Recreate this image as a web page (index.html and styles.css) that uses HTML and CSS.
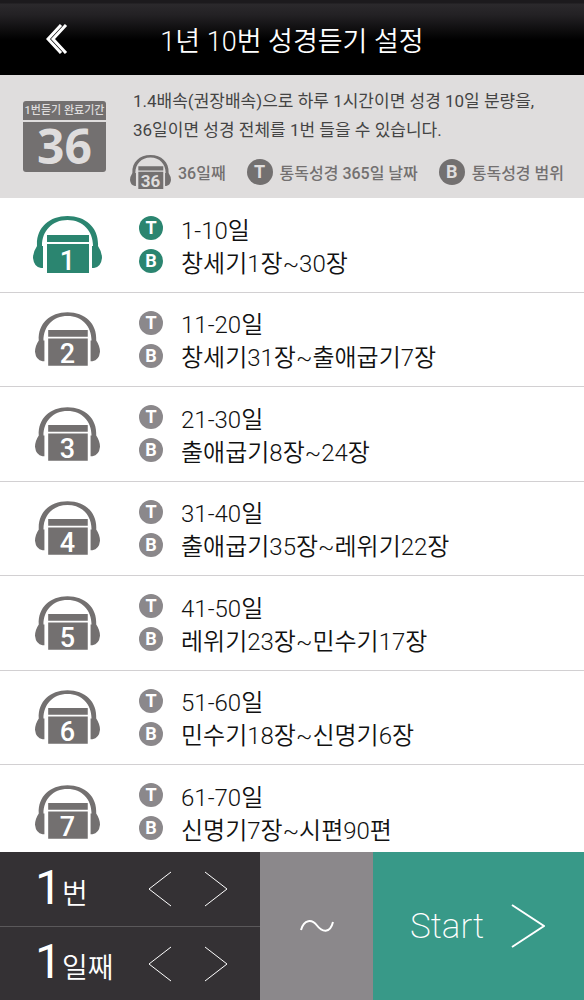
FILE: index.html
```html
<!DOCTYPE html>
<html lang="ko">
<head>
    <meta charset="UTF-8">
    <meta name="viewport" content="width=device-width, initial-scale=1.0">
    <title>1년 10번 성경듣기 설정</title>
    <link rel="stylesheet" href="styles.css">
</head>
<body>
    <svg class="defs" aria-hidden="true">
        <symbol id="headphones" viewBox="0 0 69 57">
            <path d="M4 30C3 12 16 0 34.500 0S66 12 65 30Q69 36 69 42Q68 51 61 52H59V30H60C60 15 50 4 34.500 4S9 15 9 30H10V52H8Q1 51 0 42Q0 36 4 30Z"/>
            <path d="M14 19H56V26H14ZM14 28H56V57H14Z"/>
        </symbol>
    </svg>
    <header class="title-bar">
        <button class="back" aria-label="뒤로">
            <svg width="22" height="30" viewBox="0 0 22 30">
                <path d="M15 1L2 15L15 29M20 1L7 15L20 29"/>
            </svg>
        </button>
        <h1>1년 10번 성경듣기 설정</h1>
    </header>
    <section class="info">
        <div class="calendar">
            <div class="calendar-head">1번듣기 완료기간</div>
            <div class="calendar-day">36</div>
        </div>
        <div class="info-text">
            <p>1.4배속(권장배속)으로 하루 1시간이면 성경 10일 분량을,<br>36일이면 성경 전체를 1번 들을 수 있습니다.</p>
            <div class="legend">
                <span class="legend-item">
                    <span class="phones small"><svg><use href="#headphones"/></svg><b>36</b></span>
                    36일째
                </span>
                <span class="legend-item"><span class="badge">T</span>통독성경 365일 날짜</span>
                <span class="legend-item"><span class="badge">B</span>통독성경 범위</span>
            </div>
        </div>
    </section>
    <ul class="list">
        <li><a href="#1" class="row active">
            <span class="phones"><svg><use href="#headphones"/></svg><b>1</b></span>
            <span class="lines">
                <span class="line"><span class="badge">T</span>1-10일</span>
                <span class="line"><span class="badge">B</span>창세기1장~30장</span>
            </span>
        </a></li>
        <li><a href="#2" class="row">
            <span class="phones"><svg><use href="#headphones"/></svg><b>2</b></span>
            <span class="lines">
                <span class="line"><span class="badge">T</span>11-20일</span>
                <span class="line"><span class="badge">B</span>창세기31장~출애굽기7장</span>
            </span>
        </a></li>
        <li><a href="#3" class="row">
            <span class="phones"><svg><use href="#headphones"/></svg><b>3</b></span>
            <span class="lines">
                <span class="line"><span class="badge">T</span>21-30일</span>
                <span class="line"><span class="badge">B</span>출애굽기8장~24장</span>
            </span>
        </a></li>
        <li><a href="#4" class="row">
            <span class="phones"><svg><use href="#headphones"/></svg><b>4</b></span>
            <span class="lines">
                <span class="line"><span class="badge">T</span>31-40일</span>
                <span class="line"><span class="badge">B</span>출애굽기35장~레위기22장</span>
            </span>
        </a></li>
        <li><a href="#5" class="row">
            <span class="phones"><svg><use href="#headphones"/></svg><b>5</b></span>
            <span class="lines">
                <span class="line"><span class="badge">T</span>41-50일</span>
                <span class="line"><span class="badge">B</span>레위기23장~민수기17장</span>
            </span>
        </a></li>
        <li><a href="#6" class="row">
            <span class="phones"><svg><use href="#headphones"/></svg><b>6</b></span>
            <span class="lines">
                <span class="line"><span class="badge">T</span>51-60일</span>
                <span class="line"><span class="badge">B</span>민수기18장~신명기6장</span>
            </span>
        </a></li>
        <li><a href="#7" class="row">
            <span class="phones"><svg><use href="#headphones"/></svg><b>7</b></span>
            <span class="lines">
                <span class="line"><span class="badge">T</span>61-70일</span>
                <span class="line"><span class="badge">B</span>신명기7장~시편90편</span>
            </span>
        </a></li>
    </ul>
    <footer class="controls">
        <div class="pickers">
            <div class="picker">
                <span class="value">1<small>번</small></span>
                <button aria-label="이전 번"><svg width="24" height="38" viewBox="0 0 24 38"><path d="M23 2L1 19L23 36"/></svg></button>
                <button aria-label="다음 번"><svg width="24" height="38" viewBox="0 0 24 38"><path d="M1 2L23 19L1 36"/></svg></button>
            </div>
            <div class="picker">
                <span class="value">1<small>일째</small></span>
                <button aria-label="이전 일"><svg width="24" height="38" viewBox="0 0 24 38"><path d="M23 2L1 19L23 36"/></svg></button>
                <button aria-label="다음 일"><svg width="24" height="38" viewBox="0 0 24 38"><path d="M1 2L23 19L1 36"/></svg></button>
            </div>
        </div>
        <div class="range">
            <svg width="36" height="14" viewBox="0 0 36 14"><path d="M2 11C5 0 13 0 18 6.500S31 15 34 3"/></svg>
        </div>
        <button class="start">
            Start
            <svg width="34" height="44" viewBox="0 0 34 44"><path d="M1 1L33 22L1 43"/></svg>
        </button>
    </footer>
</body>
</html>
```
FILE: styles.css
```css
* {
    box-sizing: border-box;
}
body {
    margin: 0;
    height: 100vh;
    display: flex;
    flex-direction: column;
    font-family: Roboto, "Noto Sans CJK KR", sans-serif;
    font-weight: 350;
    background-color: #fff;
    color: #111;
}
button {
    border: 0;
    padding: 0;
    background: none;
    color: inherit;
    font: inherit;
    cursor: pointer;
}
svg {
    display: block;
    fill: none;
    stroke: #fff;
}
.defs {
    position: absolute;
    width: 0;
    height: 0;
}
.title-bar {
    height: 75px;
    flex: none;
    display: grid;
    grid-template-columns: 1fr auto 1fr;
    align-items: center;
    padding-top: 3px;
    background: linear-gradient(#1c1a1d 0, #1c1a1d 3px, #2b292c 4px, #232124 15px, #000 40px);
    color: #fff;
}
.back {
    justify-self: start;
    margin-left: 46px;
}
.back svg {
    stroke-width: 3;
}
.title-bar h1 {
    margin: 0;
    font-size: 27px;
    font-weight: 350;
}
.info {
    flex: none;
    display: flex;
    gap: 27px;
    height: 123px;
    padding: 12px 20px 0 23px;
    background-color: #dfdddd;
    color: #444;
}
.calendar {
    flex: none;
    width: 83px;
    margin-top: 14px;
    color: #dfdddd;
    text-align: center;
}
.calendar-head {
    height: 19px;
    line-height: 19px;
    margin-bottom: 2px;
    border-radius: 3px 3px 0 0;
    background-color: #737070;
    font-size: 11px;
    font-weight: 500;
    white-space: nowrap;
}
.calendar-day {
    height: 50px;
    line-height: 48px;
    border-radius: 0 0 3px 3px;
    background-color: #737070;
    font-family: "Noto Sans", sans-serif;
    font-size: 48px;
    font-weight: 700;
}
.info-text {
    flex: 1;
}
.info-text p {
    margin: 0;
    font-size: 17px;
    font-weight: 400;
    line-height: 29px;
    white-space: nowrap;
}
.legend {
    display: flex;
    justify-content: space-between;
    align-items: center;
    height: 34px;
    margin: 10px 0 0 -3px;
}
.legend-item {
    display: flex;
    align-items: center;
    gap: 7px;
    font-size: 16px;
    font-weight: 500;
    color: #737070;
    white-space: nowrap;
}
.badge {
    flex: none;
    width: 24px;
    height: 24px;
    line-height: 24px;
    border-radius: 50%;
    background-color: #8b888b;
    color: #fff;
    font-size: 18px;
    font-weight: 700;
    text-align: center;
}
.legend .badge {
    width: 26px;
    height: 26px;
    line-height: 26px;
    background-color: #737070;
    color: #dfdddd;
}
.phones {
    position: relative;
    flex: none;
    width: 65px;
    height: 54px;
    color: #737070;
}
.phones svg {
    width: 100%;
    height: 100%;
    fill: currentColor;
    stroke: none;
}
/* number sits over the calendar inside the headphones */
.phones b {
    position: absolute;
    left: 0;
    right: 0;
    bottom: 0;
    line-height: 24px;
    color: #fff;
    font-size: 27px;
    font-weight: 500;
    text-align: center;
}
.phones.small {
    width: 41px;
    height: 34px;
}
.phones.small b {
    line-height: 16px;
    font-size: 17px;
    font-weight: 700;
    color: #dfdddd;
}
.list {
    flex: 1;
    min-height: 0;
    margin: 0;
    padding: 0;
    list-style: none;
    display: grid;
    grid-auto-rows: 14.45%;
    overflow: hidden;
}
.row {
    display: flex;
    align-items: center;
    height: 100%;
    border-bottom: 1px solid #d2d0d2;
    color: inherit;
    text-decoration: none;
}
.row .phones {
    margin: 0 39px 0 35px;
}
.row.active .phones {
    width: 69px;
    height: 57px;
    margin: 0 37px 0 33px;
    color: #2b8570;
}
.active .badge {
    background-color: #2b8570;
}
.line {
    display: flex;
    align-items: center;
    gap: 18px;
    height: 33px;
    font-size: 24px;
    white-space: nowrap;
}
.controls {
    flex: none;
    display: grid;
    grid-template-columns: 260fr 113fr 211fr;
    height: 148px;
    color: #fff;
}
.pickers {
    display: grid;
    grid-template-rows: 1fr 1fr;
    background-color: #343134;
}
.picker {
    display: flex;
    align-items: center;
    gap: 32px;
    padding: 0 32px 0 35px;
}
.picker + .picker {
    border-top: 1px solid #5a585a;
}
.value {
    flex: 1;
    padding-top: 4px;
    font-size: 48px;
    font-weight: 400;
    line-height: 56px;
    white-space: nowrap;
}
.value small {
    font-size: 28px;
    font-weight: 350;
}
.range {
    display: flex;
    align-items: center;
    justify-content: center;
    background-color: #8b888b;
}
.range svg {
    stroke-width: 2;
}
.start {
    display: flex;
    align-items: center;
    padding-left: 37px;
    gap: 27px;
    background-color: #389988;
    font-size: 35px;
    font-weight: 200;
}
.start svg {
    stroke-width: 2;
}
```
